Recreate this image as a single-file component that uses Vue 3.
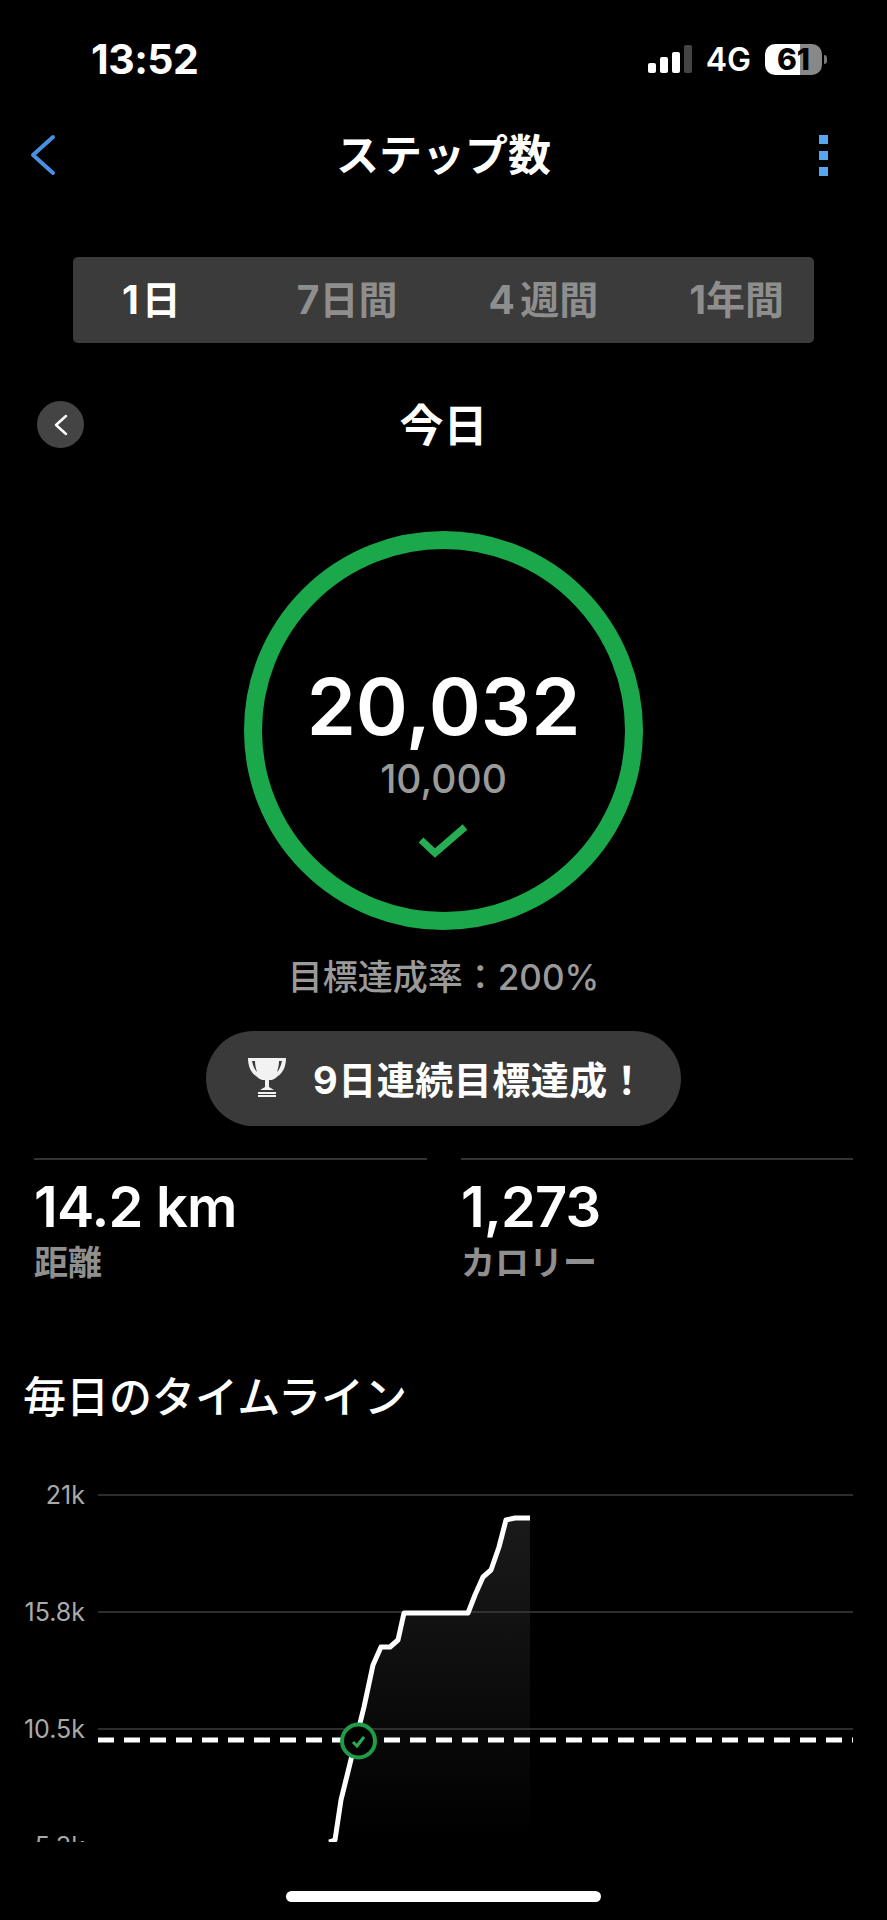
<template>
  <div class="screen">
    <!-- Status bar -->
    <div class="status">
      <span class="clock">13:52</span>
      <div class="status-right">
        <div class="signal">
          <i v-for="(h, i) in signalBars" :key="i" :class="{ off: i === 3 }" :style="{ height: h + 'px' }"></i>
        </div>
        <span class="net">4G</span>
        <div class="battery"><span>61</span></div>
        <div class="battery-cap"></div>
      </div>
    </div>

    <!-- Nav -->
    <div class="nav">
      <svg class="nav-back" width="26" height="42" viewBox="0 0 26 42" fill="none">
        <path d="M23 3 3 21l20 18" stroke="#4a90e2" stroke-width="4" stroke-linecap="round" stroke-linejoin="round" />
      </svg>
      <h1 class="title">ステップ数</h1>
      <div class="dots"><i></i><i></i><i></i></div>
    </div>

    <!-- Range tabs -->
    <div class="tabs">
      <span v-for="(t, i) in tabs" :key="t" class="tab" :class="{ active: i === 0 }">{{ t }}</span>
    </div>

    <div class="date-row">
      <button class="prev">
        <svg width="16" height="24" viewBox="0 0 16 24" fill="none">
          <path d="M13 3 3 12l10 9" stroke="#fff" stroke-width="2.5" stroke-linecap="round" stroke-linejoin="round" />
        </svg>
      </button>
      <div class="date">今日</div>
    </div>

    <!-- Goal ring -->
    <div class="ring">
      <div class="steps">20,032</div>
      <div class="goal">10,000</div>
      <svg class="ring-check" width="50" height="36" viewBox="0 0 50 36" fill="none">
        <path d="M3 18l14 13L47 5" stroke="#27ae55" stroke-width="7" />
      </svg>
    </div>

    <div class="rate">目標達成率：200%</div>

    <div class="streak">
      <svg class="trophy" width="40" height="40" viewBox="0 0 40 40">
        <path d="M1 1h38c0 8-3 15-8 18-2 2-4 3-6 4h-10c-2-1-4-2-6-4C4 16 1 9 1 1zm4 3c1 5 3 9 5 11-1-3-2-7-2-11H5zm30 0h-3c0 4-1 8-2 11 2-2 4-6 5-11z" fill="#f2f2f2" fill-rule="evenodd" />
        <path d="M18 23h4v7l5 3H13l5-3z" fill="#f2f2f2" />
        <path d="M11 35h18v2H11zM11 38h18v2H11z" fill="#f2f2f2" />
      </svg>
      <span>9日連続目標達成！</span>
    </div>

    <!-- Stats -->
    <div class="stats">
      <div v-for="s in stats" :key="s.label" class="stat">
        <div class="stat-value">{{ s.value }}</div>
        <div class="stat-label">{{ s.label }}</div>
      </div>
    </div>

    <h2 class="heading">毎日のタイムライン</h2>

    <!-- Timeline chart -->
    <svg class="chart" width="887" height="372" viewBox="0 1470 887 372">
      <defs>
        <linearGradient id="area" x1="0" y1="0" x2="0" y2="1">
          <stop offset="0" stop-color="#1a1a1a" />
          <stop offset="1" stop-color="#000" />
        </linearGradient>
      </defs>
      <path :d="areaPath" fill="url(#area)" />
      <g v-for="a in axis" :key="a.label">
        <line x1="98" x2="853" :y1="a.y" :y2="a.y" stroke="#3c3c3c" stroke-width="1.5" />
        <text x="85" :y="a.y + 9" text-anchor="end" class="axis-label">{{ a.label }}</text>
      </g>
      <line x1="98" x2="853" y1="1740" y2="1740" stroke="#fff" stroke-width="5" stroke-dasharray="16 10" />
      <path :d="linePath" fill="none" stroke="#fff" stroke-width="5" stroke-linejoin="round" />
      <circle cx="358.5" cy="1741" r="16.5" fill="#000" stroke="#1f9d46" stroke-width="4" />
      <path d="M353 1742l4 4 7-9" fill="none" stroke="#27ae55" stroke-width="3" />
    </svg>

    <div class="home"></div>
  </div>
</template>

<script setup>
import { computed } from 'vue'

const signalBars = [10, 16, 21, 28]
const tabs = ['1日', '7日間', '4 週間', '1年間']

const stats = [
  { value: '14.2 km', label: '距離' },
  { value: '1,273', label: 'カロリー' }
]

const axis = [
  { label: '21k', y: 1495 },
  { label: '15.8k', y: 1612 },
  { label: '10.5k', y: 1729 },
  { label: '5.3k', y: 1846 }
]

// Traced from the step curve, in page pixels
const points = [
  [329, 1842], [335, 1840], [341, 1800], [364, 1707], [373, 1665], [381, 1647],
  [390, 1647], [398, 1640], [404, 1613], [468, 1613], [475, 1595], [483, 1577],
  [491, 1570], [499, 1547], [506, 1520], [515, 1518], [530, 1518]
]

const linePath = computed(() => 'M' + points.map((p) => p.join(' ')).join('L'))
const areaPath = computed(() => linePath.value + 'L530 1842L329 1842Z')
</script>

<style>
html,
body {
  background: #000;
}
</style>

<style scoped>
.screen {
  position: relative;
  width: 887px;
  height: 1920px;
  background: #000;
  color: #fff;
  font-family: Inter, "Noto Sans CJK JP", sans-serif;
  display: flex;
  flex-direction: column;
  overflow: hidden;
}

.status {
  height: 118px;
  display: flex;
  align-items: center;
  justify-content: space-between;
  padding: 0 60px 0 91px;
  flex-shrink: 0;
}

.clock {
  font-size: 41px;
  font-weight: 700;
  letter-spacing: -0.5px;
}

.status-right {
  display: flex;
  align-items: center;
}

.signal {
  display: flex;
  align-items: flex-end;
  gap: 4px;
  height: 28px;
}

.signal i {
  width: 8px;
  background: #fff;
  border-radius: 2px;
}

.signal i.off {
  background: #444;
}

.net {
  font-size: 32px;
  font-weight: 600;
  margin: 0 14px;
}

.battery {
  width: 57px;
  height: 31px;
  border-radius: 10px;
  background: linear-gradient(90deg, #fff 61%, #888 61%);
  color: #000;
  font-size: 30px;
  font-weight: 800;
  line-height: 31px;
  display: flex;
  align-items: center;
  justify-content: center;
}

.battery-cap {
  width: 3px;
  height: 9px;
  background: #777;
  border-radius: 0 3px 3px 0;
  margin-left: 2px;
}

.nav {
  height: 74px;
  display: grid;
  grid-template-columns: minmax(0, 1fr) auto minmax(0, 1fr);
  align-items: center;
  padding: 0 59px;
  flex-shrink: 0;
}

.nav-back {
  margin-left: -29px;
}

.title {
  margin: 0;
  font-size: 43px;
  font-weight: 700;
  line-height: 1;
}

.dots {
  justify-self: end;
  display: flex;
  flex-direction: column;
  gap: 7px;
}

.dots i {
  width: 9px;
  height: 9px;
  background: #5aa5ef;
}

.tabs {
  margin: 65px 0 0 73px;
  width: 741px;
  height: 86px;
  box-sizing: border-box;
  background: #3b3b3b;
  border-radius: 5px;
  display: flex;
  align-items: center;
  padding: 0 0 7px 49px;
  gap: 91px;
  flex-shrink: 0;
}

.tab {
  font-size: 39px;
  font-weight: 700;
  color: #8e8e8e;
  white-space: nowrap;
  word-spacing: -4px;
}

.tab.active {
  color: #fff;
  margin-right: 22px;
  letter-spacing: 3px;
}

.date-row {
  margin-top: 58px;
  height: 47px;
  padding: 0 37px;
  display: grid;
  grid-template-columns: 47px 1fr 47px;
  align-items: center;
  flex-shrink: 0;
}

.prev {
  width: 47px;
  height: 47px;
  border: none;
  border-radius: 50%;
  background: #444;
  padding: 0;
  display: flex;
  align-items: center;
  justify-content: center;
}

.date {
  text-align: center;
  font-size: 44px;
  font-weight: 700;
  line-height: 1;
  margin-top: 2px;
}

.ring {
  margin: 83px auto 0;
  width: 399px;
  height: 399px;
  box-sizing: border-box;
  border: 18px solid #1aa84a;
  border-radius: 50%;
  display: flex;
  flex-direction: column;
  align-items: center;
  padding-top: 110px;
  flex-shrink: 0;
}

.steps {
  font-size: 79px;
  font-weight: 600;
  line-height: 94px;
}

.goal {
  margin-top: 2px;
  font-size: 39px;
  font-weight: 500;
  line-height: 48px;
  color: #9a9a9a;
}

.ring-check {
  margin-top: 19px;
  margin-left: -2px;
}

.rate {
  margin-top: 26px;
  text-align: center;
  font-size: 35px;
  line-height: 42px;
  font-weight: 500;
  color: #9a9a9a;
}

.streak {
  margin: 33px auto 0;
  width: 475px;
  height: 95px;
  border-radius: 48px;
  background: #3a3a3a;
  display: flex;
  align-items: center;
  padding: 0 0 3px 41px;
  box-sizing: border-box;
  gap: 26px;
  font-size: 38px;
  font-weight: 700;
  letter-spacing: 0.5px;
  flex-shrink: 0;
}

.stats {
  margin: 32px 34px 0;
  display: grid;
  grid-template-columns: 393px 392px;
  column-gap: 34px;
}

.stat {
  border-top: 2px solid #333;
  padding-top: 12px;
}

.stat-value {
  font-size: 56px;
  font-weight: 600;
  line-height: 70px;
  letter-spacing: -0.8px;
}

.stat-label {
  font-size: 34px;
  font-weight: 700;
  line-height: 42px;
  color: #8f8f8f;
}

.heading {
  margin: 83px 0 0 23px;
  font-size: 43px;
  font-weight: 500;
  line-height: 60px;
}

.chart {
  display: block;
  position: absolute;
  top: 1470px;
  left: 0;
}

.axis-label {
  font-size: 25px;
  fill: #aaa;
}

.home {
  position: absolute;
  top: 1891px;
  left: 286px;
  width: 315px;
  height: 11px;
  border-radius: 6px;
  background: #fff;
}
</style>
